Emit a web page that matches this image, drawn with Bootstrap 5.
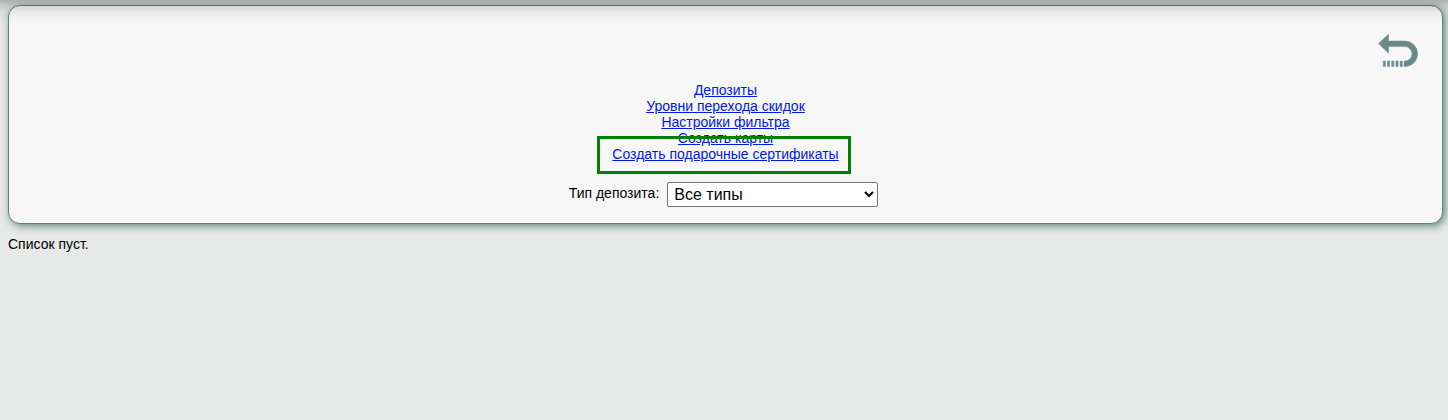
<!DOCTYPE html>
<html lang="ru">
<head>
<meta charset="utf-8">
<meta name="viewport" content="width=device-width, initial-scale=1">
<title>Депозиты</title>
<link href="https://cdn.jsdelivr.net/npm/bootstrap@5.3.0/dist/css/bootstrap.min.css" rel="stylesheet">
<style>
body { background: #e7e9e8; color: #000; font: 14px/16px "Liberation Sans", Arial, sans-serif; }
.top-shade { height: 24px; background: linear-gradient(rgba(0,0,0,.24), rgba(0,0,0,.14) 5px, rgba(0,0,0,.06) 12px, rgba(0,0,0,.02) 18px, transparent); }
.page { padding: 5px 5px 0 8px; }
.panel { background: #f7f7f7; border: 1px solid #5f8378; border-radius: 12px; box-shadow: 2px 2px 8px #5f8378; padding: 28px 24px 16px; }
.panel a { color: #0019e6; }
.back-link { width: 40px; height: 34px; }
.links { padding-top: 14px; }
.marker { top: -10px; right: -12px; bottom: -12px; left: -15px; border: 3px solid #008000; }
.filter { margin-top: 20px; padding-right: 4px; }
.filter label { padding-bottom: 4px; }
.filter select { width: 211px; height: 25px; border: 1px solid #767676; border-radius: 2px; background: #fff; color: #000; font-size: 16px; padding: 0 2px; }
</style>
</head>
<body>
<div class="top-shade position-fixed top-0 start-0 w-100 pe-none z-1"></div>
<main class="page">
  <section class="panel">
    <div class="d-flex justify-content-end">
      <a class="back-link" href="#" aria-label="Назад">
        <svg class="d-block" width="40" height="34" viewBox="0 0 40 34" fill="#6a8a86" stroke="#6a8eac" stroke-width=".5">
          <path d="M.5 9.500 10.500 .3v6.700h16.300a12.800 12.800 0 0 1 0 25.600h-.8v-5.600h.8a7.200 7.200 0 0 0 0-14.400H10.500v6.600z"/>
          <path d="M5.300 27h2.200v5.500H5.300zM9.500 27h2.200v5.500H9.500zM13.700 27h2.200v5.500h-2.200zM17.900 27h2.200v5.500h-2.200zM22.100 27h2.200v5.500h-2.200z"/>
        </svg>
      </a>
    </div>
    <nav class="links d-flex flex-column align-items-center">
      <a href="#">Депозиты</a>
      <a href="#">Уровни перехода скидок</a>
      <a href="#">Настройки фильтра</a>
      <a href="#">Создать карты</a>
      <span class="position-relative">
        <a href="#">Создать подарочные сертификаты</a>
        <span class="marker position-absolute pe-none"></span>
      </span>
    </nav>
    <form class="filter d-flex justify-content-center align-items-center gap-2">
      <label for="type">Тип депозита:</label>
      <select id="type"><option>Все типы</option></select>
    </form>
  </section>
  <p class="mt-2 pt-1 mb-0">Список пуст.</p>
</main>
<script src="https://cdn.jsdelivr.net/npm/bootstrap@5.3.0/dist/js/bootstrap.bundle.min.js"></script>
</body>
</html>
